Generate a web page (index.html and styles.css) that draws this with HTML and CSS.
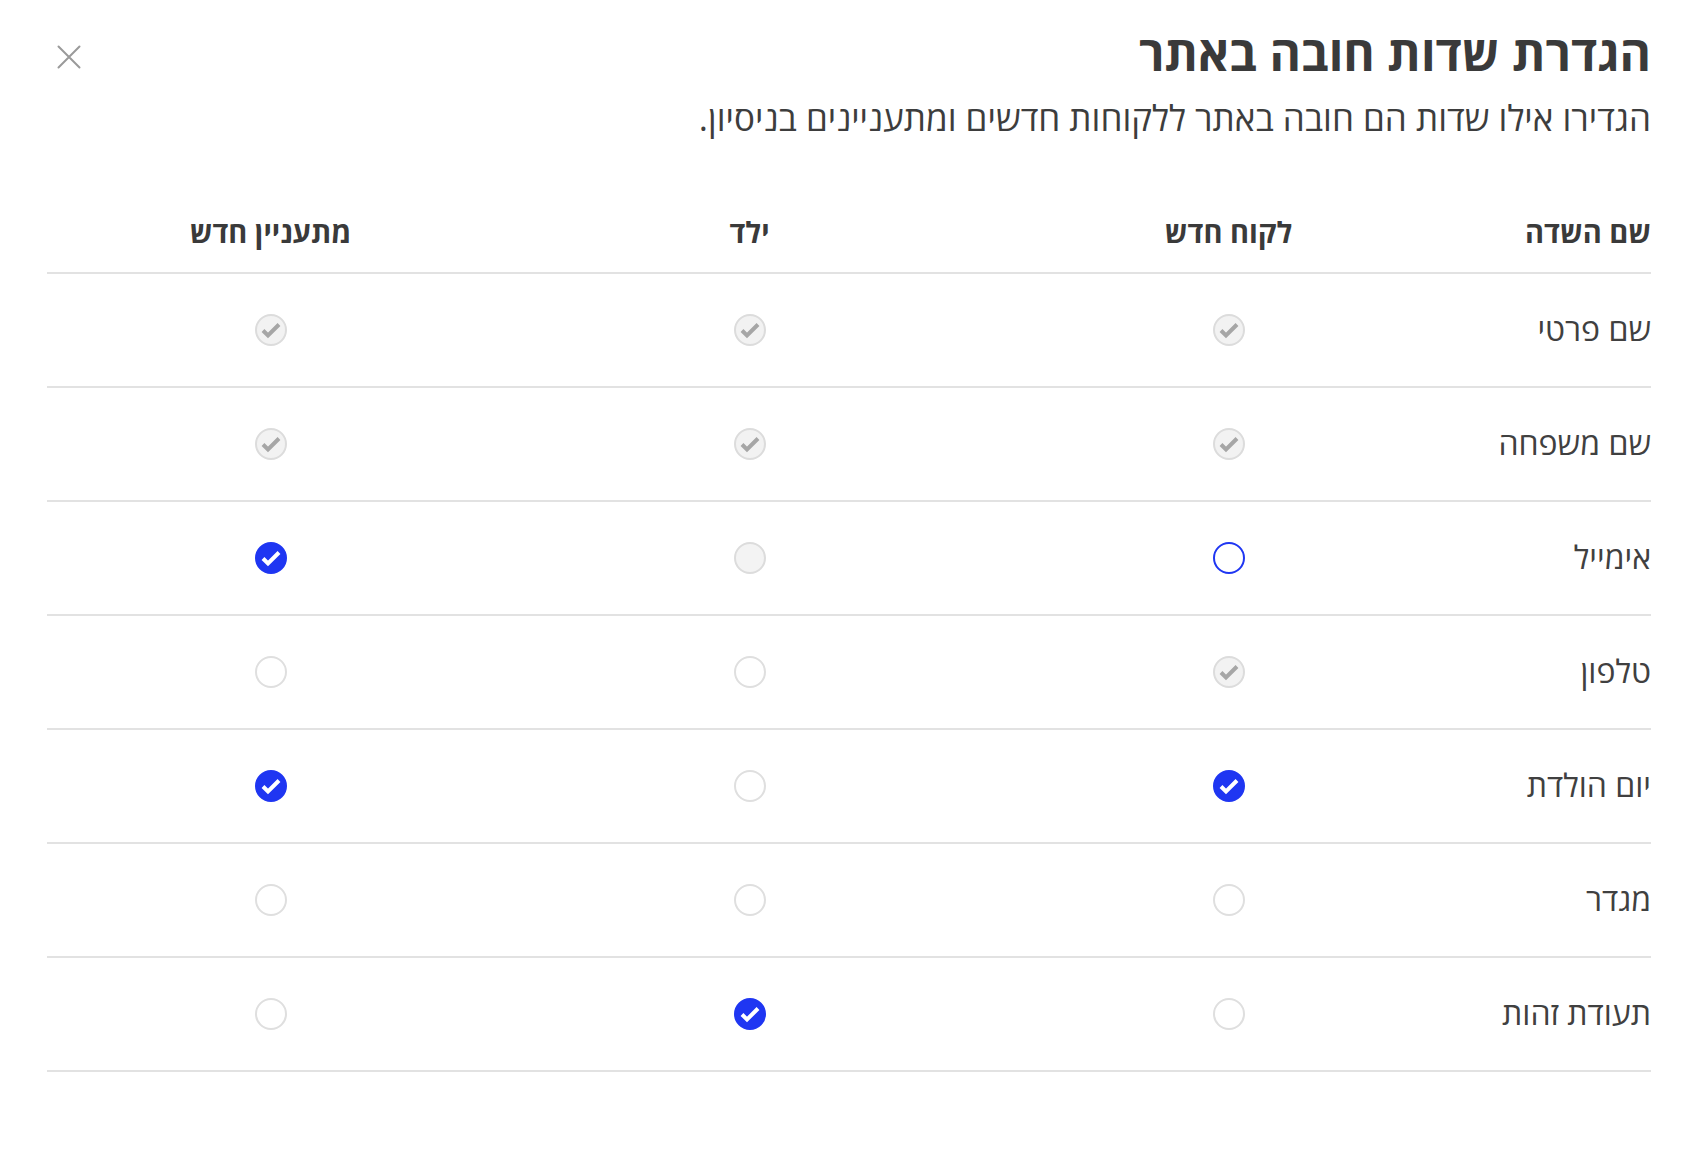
FILE: index.html
```html
<!DOCTYPE html>
<html lang="he" dir="rtl">
<head>
<meta charset="utf-8">
<link rel="stylesheet" href="styles.css">
</head>
<body>
<div class="modal">
  <header class="head">
    <div class="titles">
      <h1 class="title">הגדרת שדות חובה באתר</h1>
      <p class="subtitle">הגדירו אילו שדות הם חובה באתר ללקוחות חדשים ומתעניינים בניסיון.</p>
    </div>
    <button class="close" aria-label="סגור">
      <svg width="24" height="24" viewBox="0 0 24 24"><path d="M1.5 1.5L22.5 22.5M22.5 1.5L1.5 22.5" stroke="#9a9a9a" stroke-width="2" stroke-linecap="round" fill="none"/></svg>
    </button>
  </header>

  <div class="table">
    <div class="row header">
      <div class="cell name">שם השדה</div>
      <div class="cell">לקוח חדש</div>
      <div class="cell">ילד</div>
      <div class="cell last">מתעניין חדש</div>
    </div>

    <div class="row">
      <div class="cell name">שם פרטי</div>
      <div class="cell"><span class="cb dis-on"><svg viewBox="0 0 32 32"><path d="M8 16.5L13 21.5L24 10.5"/></svg></span></div>
      <div class="cell"><span class="cb dis-on"><svg viewBox="0 0 32 32"><path d="M8 16.5L13 21.5L24 10.5"/></svg></span></div>
      <div class="cell last"><span class="cb dis-on"><svg viewBox="0 0 32 32"><path d="M8 16.5L13 21.5L24 10.5"/></svg></span></div>
    </div>

    <div class="row">
      <div class="cell name">שם משפחה</div>
      <div class="cell"><span class="cb dis-on"><svg viewBox="0 0 32 32"><path d="M8 16.5L13 21.5L24 10.5"/></svg></span></div>
      <div class="cell"><span class="cb dis-on"><svg viewBox="0 0 32 32"><path d="M8 16.5L13 21.5L24 10.5"/></svg></span></div>
      <div class="cell last"><span class="cb dis-on"><svg viewBox="0 0 32 32"><path d="M8 16.5L13 21.5L24 10.5"/></svg></span></div>
    </div>

    <div class="row">
      <div class="cell name">אימייל</div>
      <div class="cell"><span class="cb focus"></span></div>
      <div class="cell"><span class="cb dis-off"></span></div>
      <div class="cell last"><span class="cb on"><svg viewBox="0 0 32 32"><path d="M8 16.5L13 21.5L24 10.5"/></svg></span></div>
    </div>

    <div class="row">
      <div class="cell name">טלפון</div>
      <div class="cell"><span class="cb dis-on"><svg viewBox="0 0 32 32"><path d="M8 16.5L13 21.5L24 10.5"/></svg></span></div>
      <div class="cell"><span class="cb off"></span></div>
      <div class="cell last"><span class="cb off"></span></div>
    </div>

    <div class="row">
      <div class="cell name">יום הולדת</div>
      <div class="cell"><span class="cb on"><svg viewBox="0 0 32 32"><path d="M8 16.5L13 21.5L24 10.5"/></svg></span></div>
      <div class="cell"><span class="cb off"></span></div>
      <div class="cell last"><span class="cb on"><svg viewBox="0 0 32 32"><path d="M8 16.5L13 21.5L24 10.5"/></svg></span></div>
    </div>

    <div class="row">
      <div class="cell name">מגדר</div>
      <div class="cell"><span class="cb off"></span></div>
      <div class="cell"><span class="cb off"></span></div>
      <div class="cell last"><span class="cb off"></span></div>
    </div>

    <div class="row">
      <div class="cell name">תעודת זהות</div>
      <div class="cell"><span class="cb off"></span></div>
      <div class="cell"><span class="cb on"><svg viewBox="0 0 32 32"><path d="M8 16.5L13 21.5L24 10.5"/></svg></span></div>
      <div class="cell last"><span class="cb off"></span></div>
    </div>
  </div>
</div>
</body>
</html>
```

FILE: styles.css
```css
* { box-sizing: border-box; }
html, body {
  margin: 0;
  background: #ffffff;
}
body {
  font-family: "Open Sans", "DejaVu Sans", sans-serif;
  color: #3a3a3a;
}
.modal {
  padding: 23px 39px 0 47px;
}
.head {
  display: flex;
  justify-content: space-between;
  align-items: flex-start;
}
.titles {
  display: flex;
  flex-direction: column;
}
.title {
  margin: 0;
  font-size: 48px;
  font-weight: 700;
  line-height: 60px;
  color: #3a3a3a;
}
.subtitle {
  margin: 11px 0 0 0;
  font-size: 35px;
  line-height: 48px;
  color: #3d3d3d;
}
.close {
  border: 0;
  background: none;
  padding: 0;
  margin: 22px 0 0 10px;
  width: 24px;
  height: 24px;
  cursor: pointer;
}
.close svg { display: block; }

.table {
  margin-top: 70px;
}
.row {
  display: grid;
  grid-template-columns: 183px 479px 479px 1fr;
  height: 114px;
  border-bottom: 2px solid #e2e2e2;
  align-items: center;
}
.row.header {
  height: 62px;
  align-items: start;
}
.cell {
  display: flex;
  justify-content: center;
  align-items: center;
  font-size: 32px;
  color: #404040;
}
.cell.name {
  justify-content: flex-start;
  padding-bottom: 4px;
}
.cell.last {
  padding-right: 16px;
}
.header .cell {
  font-weight: 700;
  font-size: 29px;
  line-height: 40px;
  color: #3a3a3a;
  padding-bottom: 0;
}

.cb {
  width: 32px;
  height: 32px;
  border-radius: 50%;
  display: block;
  border: 2px solid #dfdfdf;
  background: #fff;
  position: relative;
}
.cb svg {
  position: absolute;
  inset: -2px;
  width: 32px;
  height: 32px;
}
.cb svg path {
  fill: none;
  stroke-width: 4;
  stroke-linecap: butt;
  stroke-linejoin: miter;
}
.cb.dis-on {
  background: #f2f2f2;
  border-color: #dcdcdc;
}
.cb.dis-on path { stroke: #a6a6a6; }
.cb.dis-off {
  background: #f3f3f3;
  border-color: #dcdcdc;
}
.cb.off {
  background: #fff;
  border-color: #dfdfdf;
}
.cb.focus {
  background: #fff;
  border-color: #1f36f2;
}
.cb.on {
  background: #1f36f2;
  border-color: #1f36f2;
}
.cb.on path { stroke: #ffffff; }
```
